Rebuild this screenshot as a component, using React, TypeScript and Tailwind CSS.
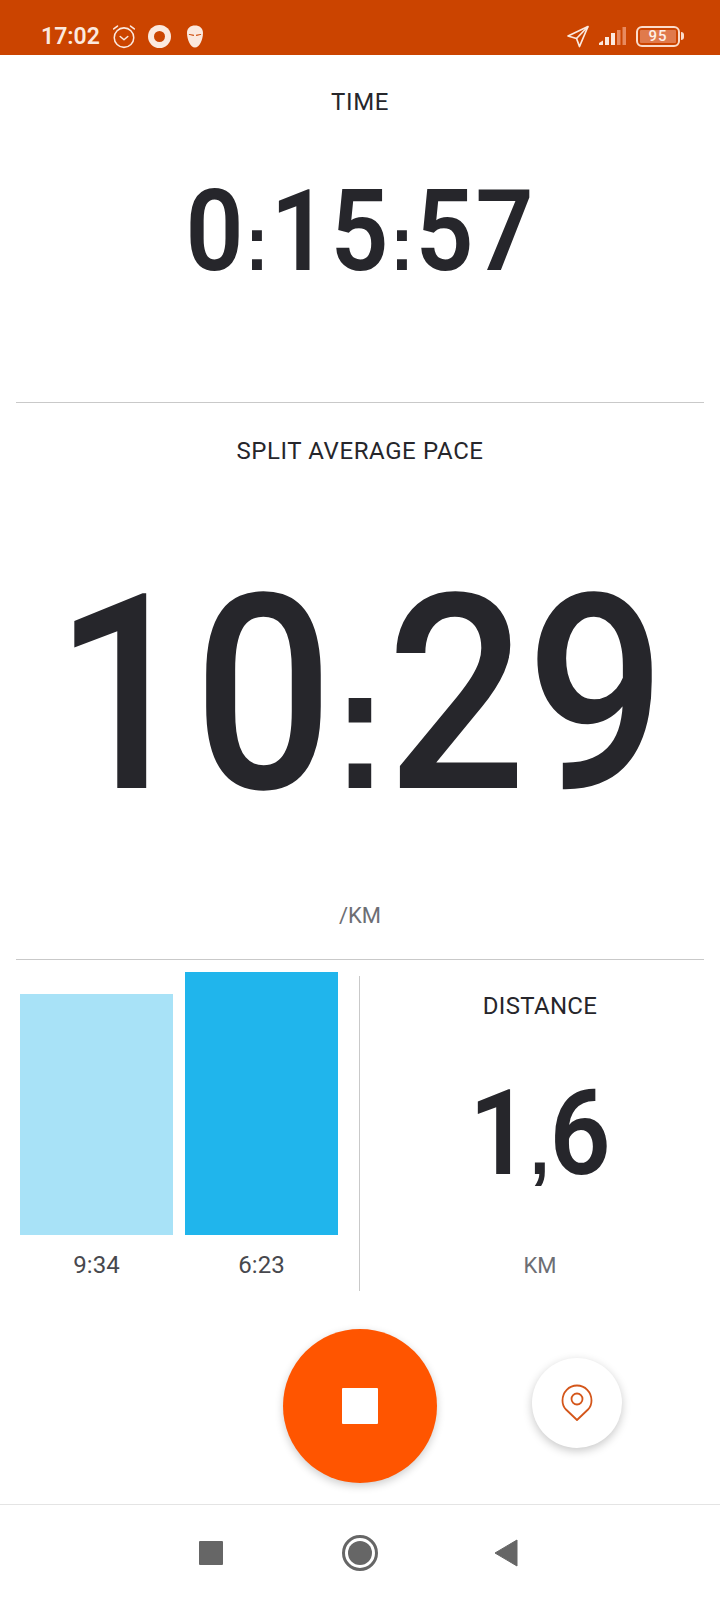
const font = { fontFamily: 'Roboto, sans-serif' };
const squareFont = { fontFamily: '"Liberation Sans", sans-serif' };

function AlarmIcon() {
  return (
    <svg width="26" height="26" viewBox="0 0 24 24" fill="none" stroke="#fbe9df" strokeWidth="1.4" strokeLinecap="round" strokeLinejoin="round">
      <circle cx="12" cy="13.5" r="9" />
      <path d="M8.5 12.5 12 15.5 15.5 12.5" />
      <path d="M2.5 5.5 6 2.8M21.5 5.5 18 2.8" />
    </svg>
  );
}

function MaskIcon() {
  return (
    <svg width="18" height="25" viewBox="0 0 18 24" fill="#fbe9df">
      <path fillRule="evenodd" d="M9 1C13.6 1 17 3.500 17 8.500 17 15 13.500 23 9 23 4.500 23 1 15 1 8.500 1 3.500 4.400 1 9 1ZM2.800 10.200 7.800 11.500 8 10.300 3 9.600ZM15.200 10.200 10.200 11.500 10 10.300 15 9.600Z" />
    </svg>
  );
}

function LocationArrow() {
  return (
    <svg width="24" height="24" viewBox="0 0 24 24" fill="none" stroke="#fbe9df" strokeWidth="1.7" strokeLinejoin="round">
      <path d="M22 2.500 2 12l8.500 2.500 3 8z" />
      <path d="M22 2.500 10.500 14.500" />
    </svg>
  );
}

function SignalIcon() {
  return (
    <svg width="28" height="20" viewBox="0 0 28 20">
      <path d="M1 19v-2l4-2.500V19z" fill="#fbe9df" />
      <rect x="7" y="11" width="4" height="8" fill="#fbe9df" />
      <rect x="13" y="7" width="4" height="12" fill="#fbe9df" />
      <rect x="19" y="4" width="3.500" height="15" fill="#e88a5f" />
      <rect x="24.500" y="1" width="3.500" height="18" fill="#e88a5f" />
    </svg>
  );
}

function Battery() {
  return (
    <div className="flex items-center gap-[1px]">
      <div className="flex h-[21px] w-[44px] items-center justify-center rounded-[6px] border-2 border-[#fbdccb] p-[2px]">
        <div className="flex h-full w-full items-center justify-center rounded-[1px] bg-[#e07a4c] text-[15px] font-medium leading-none tracking-[1px] text-[#fdf0e8]">95</div>
      </div>
      <div className="h-[8px] w-[3px] rounded-r-sm bg-[#fbdccb]" />
    </div>
  );
}

function PinIcon() {
  return (
    <svg width="32" height="38" viewBox="0 0 32 38" fill="none" stroke="#d4561a" strokeWidth="1.800" strokeLinejoin="round">
      <path d="M16 36 5 25.500C2.500 23 1.500 19.500 1.500 16.500 1.500 8 8 1.500 16 1.500S30.500 8 30.500 16.500C30.500 19.500 29.500 23 27 25.500Z" />
      <circle cx="16" cy="15" r="5.500" />
    </svg>
  );
}

export default function App() {
  return (
    <div className="flex h-[1600px] w-[720px] flex-col overflow-hidden bg-white" style={font}>
      {/* status bar */}
      <div className="flex h-[55px] shrink-0 items-center justify-between bg-[#cb4400] pl-[41px] pr-[36px] pt-[17px]">
        <div className="flex items-center">
          <span className="text-[23px] font-semibold leading-none text-[#fbe9df]">17:02</span>
          <span className="ml-[11px]"><AlarmIcon /></span>
          <span className="ml-[11px] flex h-[23px] w-[23px] items-center justify-center rounded-full bg-[#fbe9df]">
            <span className="h-[11px] w-[11px] rounded-full bg-[#cb4400]" />
          </span>
          <span className="ml-[15px]"><MaskIcon /></span>
        </div>
        <div className="flex items-center">
          <LocationArrow />
          <span className="ml-[8px]"><SignalIcon /></span>
          <span className="ml-[10px]"><Battery /></span>
        </div>
      </div>

      {/* time */}
      <div className="flex h-[347px] shrink-0 flex-col items-center text-[#26262b]">
        <div className="mt-[32px] text-[24px] leading-[30px] tracking-[0.6px] text-[#26262b]">TIME</div>
        <div className="mt-[41px] origin-center scale-x-[0.9] whitespace-nowrap text-[113px] font-semibold leading-[148px] tracking-[2px]">
          0<span className="text-[78px] font-bold leading-none" style={squareFont}>:</span>15<span className="text-[78px] font-bold leading-none" style={squareFont}>:</span>57
        </div>
      </div>
      <div className="mx-[16px] h-px shrink-0 bg-[#c9c9c9]" />

      {/* split pace */}
      <div className="flex h-[556px] shrink-0 flex-col items-center text-[#26262b]">
        <div className="mt-[33px] text-[24px] leading-[30px] tracking-[0.6px]">SPLIT AVERAGE PACE</div>
        <div className="mt-[65px] origin-center scale-x-[0.9] whitespace-nowrap text-[273px] font-medium leading-[328px]">
          10<span className="text-[178px] font-bold leading-none" style={squareFont}>:</span>29
        </div>
        <div className="mt-[44px] text-[22px] leading-[26px] text-[#6d6e74]">/KM</div>
      </div>
      <div className="mx-[16px] h-px shrink-0 bg-[#c9c9c9]" />

      {/* bars + distance */}
      <div className="flex h-[345px] shrink-0">
        <div className="flex w-[359px] shrink-0 flex-col pl-[20px] pt-[12px]">
          <div className="flex h-[263px] items-end gap-[12px]">
            <div className="h-[241px] w-[153px] bg-[#a8e2f7]" />
            <div className="h-[263px] w-[153px] bg-[#20b5ec]" />
          </div>
          <div className="mt-[15px] flex gap-[12px] text-[24px] leading-[30px] text-[#47484d]">
            <div className="w-[153px] text-center">9:34</div>
            <div className="w-[153px] text-center">6:23</div>
          </div>
        </div>
        <div className="mt-[16px] h-[315px] w-px shrink-0 bg-[#c9c9c9]" />
        <div className="flex flex-1 flex-col items-center text-[#26262b]">
          <div className="mt-[31px] text-[24px] leading-[30px] tracking-[0.3px]">DISTANCE</div>
          <div className="mt-[43px] origin-center scale-x-[0.9] whitespace-nowrap text-[119px] font-semibold leading-[140px]">
            1<span className="text-[78px] font-bold leading-none" style={squareFont}>,</span>6
          </div>
          <div className="mt-[47px] text-[22px] leading-[30px] text-[#6d6e74]">KM</div>
        </div>
      </div>

      {/* actions */}
      <div className="grid h-[199px] shrink-0 grid-cols-[1fr_auto_1fr] items-start">
        <div />
        <button className="mt-[24px] flex h-[154px] w-[154px] items-center justify-center rounded-full bg-[#ff5500] shadow-[0_3px_8px_rgba(0,0,0,0.2)]">
          <span className="h-[36px] w-[36px] rounded-[1px] bg-white" />
        </button>
        <div className="pl-[95px] pt-[53px]">
          <button className="flex h-[90px] w-[90px] items-center justify-center rounded-full bg-white shadow-[0_3px_10px_rgba(0,0,0,0.22)]">
            <PinIcon />
          </button>
        </div>
      </div>

      {/* nav bar */}
      <div className="flex flex-1 items-center justify-center border-t border-[#e4e4e4]">
        <div className="grid w-[447px] grid-cols-3 items-center justify-items-center">
          <span className="h-[24px] w-[24px] rounded-[1px] bg-[#666666]" />
          <span className="flex h-[36px] w-[36px] items-center justify-center rounded-full border-[3px] border-[#666666]">
            <span className="h-[24px] w-[24px] rounded-full bg-[#666666]" />
          </span>
          <svg className="mr-[7px]" width="24" height="28" viewBox="0 0 24 28"><path d="M23 1v26L1 14z" fill="#666666" stroke="#666666" strokeWidth="1" strokeLinejoin="round" /></svg>
        </div>
      </div>
    </div>
  );
}
